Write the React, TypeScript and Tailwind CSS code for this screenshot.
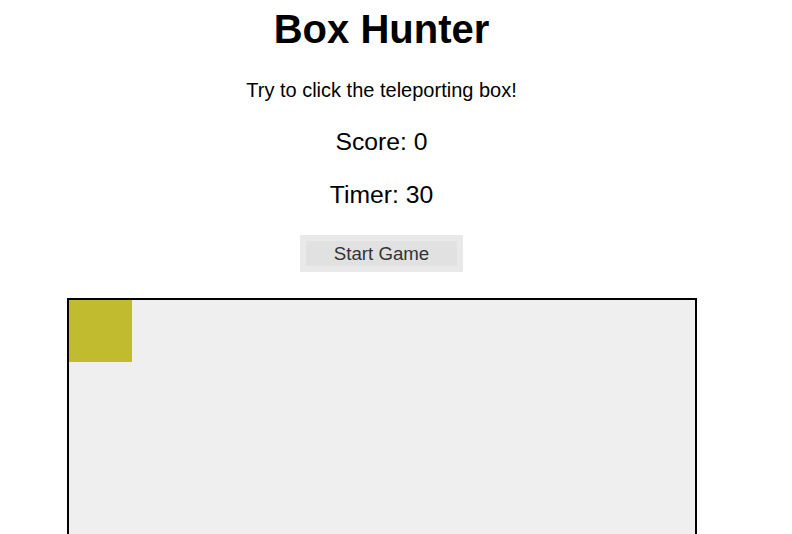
import { useState } from 'react'

export default function App() {
  const [score] = useState(0)
  const [timer] = useState(30)
  const [pos] = useState({ x: 0, y: 0 })

  return (
    <div className="w-[763px] flex flex-col items-center text-black font-['Liberation_Sans',Arial,sans-serif]">
      <h1 className="mt-[5px] text-[40px] leading-[48px] font-bold">Box Hunter</h1>
      <p className="mt-[25px] text-[20px] leading-[24px]">Try to click the teleporting box!</p>
      <p className="mt-[26px] text-[24.7px] leading-[28px]">Score: {score}</p>
      <p className="mt-[25px] text-[24.7px] leading-[28px]">Timer: {timer}</p>
      <button className="mt-[26px] w-[163px] h-[37px] border-[6px] border-[#e9e9e9] bg-[#e1e1e1] text-[18.7px] leading-[25px] text-[#333]">
        Start Game
      </button>
      <div className="mt-[26px] relative w-[630px] h-[400px] border-2 border-black bg-[#efefef] shrink-0">
        <div
          className="absolute w-[63px] h-[62px] bg-[#c0bb2f]"
          style={{ left: pos.x, top: pos.y }}
        />
      </div>
    </div>
  )
}
